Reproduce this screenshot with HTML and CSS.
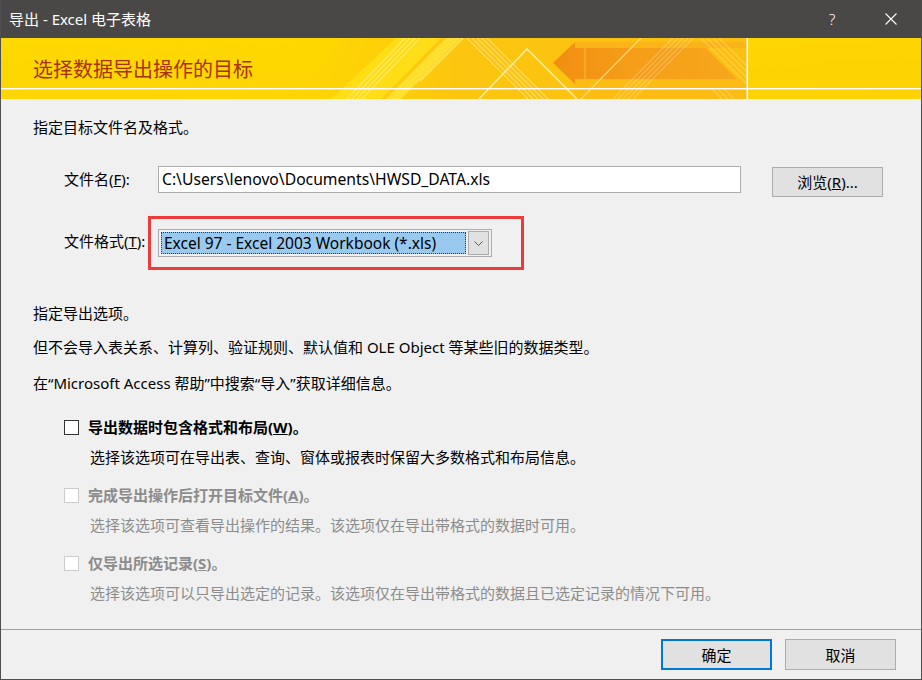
FILE: index.html
```html
<!DOCTYPE html>
<html lang="zh-CN">
<head>
<meta charset="utf-8">
<title>导出 - Excel 电子表格</title>
<link rel="stylesheet" href="styles.css">
</head>
<body>
<div class="window">
  <div class="titlebar">
    <span class="title">导出 - Excel 电子表格</span>
    <span class="help">?</span>
    <span class="close">
      <svg width="12" height="12" viewBox="0 0 12 12"><path d="M0.5 0.5 L11.5 11.5 M11.5 0.5 L0.5 11.5" stroke="#fff" stroke-width="1.1" fill="none"/></svg>
    </span>
  </div>

  <div class="banner">
    <svg class="banner-art" width="920" height="61" viewBox="0 0 920 61">
      <defs>
        <linearGradient id="bannerBase" x1="0" y1="0" x2="1" y2="1">
          <stop offset="0" stop-color="#ffd900"/>
          <stop offset="1" stop-color="#fdd200"/>
        </linearGradient>
        <linearGradient id="arrowFill" x1="0" y1="0" x2="1" y2="0">
          <stop offset="0" stop-color="#f28d12"/>
          <stop offset="0.4" stop-color="#f59d18"/>
          <stop offset="1" stop-color="#f7a71b"/>
        </linearGradient>
        <linearGradient id="warmBand" x1="0" y1="0" x2="1" y2="0">
          <stop offset="0" stop-color="#fdcb0e" stop-opacity="0"/>
          <stop offset="0.35" stop-color="#fcc60f"/>
          <stop offset="1" stop-color="#fbbf12"/>
        </linearGradient>
      </defs>
      <rect width="920" height="61" fill="url(#bannerBase)"/>
      <!-- warm backdrop behind the pattern -->
      <polygon points="340,0 746,0 746,61 300,61" fill="url(#warmBand)"/>
      <!-- bright diagonal band -->
      <polygon points="395,0 440,0 380,61 330,61" fill="#ffe11a" opacity=".8"/>
      <polygon points="445,0 460,0 400,61 385,61" fill="#ffe840" opacity=".7"/>
      <!-- rising stripe group, left -->
      <g stroke="#fff" stroke-width="1.2" opacity=".35">
        <path d="M346 61 L404 0 M351 61 L409 0 M356 61 L414 0 M361 61 L419 0"/>
      </g>
      <!-- falling stripe group -->
      <g stroke="#fff" stroke-width="1.2" opacity=".4">
        <path d="M466 0 L527 61 M471 0 L532 61 M476 0 L537 61 M481 0 L542 61 M486 0 L547 61"/>
      </g>
      <!-- orange arrow block -->
      <polygon points="574,4 746,4 746,10 574,10" fill="#fab41a"/>
      <polygon points="552,25 574,4 574,10 705,10 736,41 574,41 574,46" fill="url(#arrowFill)"/>
      <polygon points="574,41 746,41 746,61 574,61" fill="#fbbb15" opacity=".85"/>
      <line x1="584" y1="10" x2="584" y2="41" stroke="#fbbd3c" stroke-width="1"/>
      <!-- triangle outline -->
      <path d="M478 61 L526 11 L576 61" stroke="#fff3b0" stroke-width="1.6" fill="none" opacity=".85"/>
      <!-- rising stripe group, right -->
      <g stroke="#fff" stroke-width="1.1" opacity=".25">
        <path d="M612 61 L672 0 M617 61 L677 0 M622 61 L682 0 M627 61 L687 0 M632 61 L692 0"/>
      </g>
      <path d="M580 61 L640 0" stroke="#ffe27a" stroke-width="1.4" opacity=".8"/>
      <path d="M419 43 L462 0" stroke="#fff176" stroke-width="1.4" opacity=".8"/>
      <!-- falling stripe group, far right -->
      <g stroke="#fff" stroke-width="1.1" opacity=".25">
        <path d="M700 0 L746 46 M706 0 L746 40 M712 0 L746 34 M718 0 L746 28"/>
        <path d="M710 50 L721 61 M716 50 L727 61 M722 50 L733 61"/>
      </g>
      <!-- frame lines -->
      <rect x="0" y="50" width="920" height="1.4" fill="#fff"/>
      <rect x="745.5" y="0" width="1.6" height="61" fill="#fff"/>
    </svg>
    <h1 class="banner-title">选择数据导出操作的目标</h1>
  </div>

  <div class="content">
    <p class="intro">指定目标文件名及格式。</p>

    <div class="file-row">
      <span class="field-label file-label">文件名(<u>F</u>):</span>
      <div class="textbox">C:\Users\lenovo\Documents\HWSD_DATA.xls</div>
      <button class="btn browse">浏览(<u>R</u>)...</button>
    </div>

    <div class="format-row">
      <span class="field-label format-label">文件格式(<u>T</u>):</span>
      <div class="mark">
        <div class="combo">
          <span class="combo-value">Excel 97 - Excel 2003 Workbook (*.xls)</span>
          <span class="combo-arrow">
            <svg width="9" height="5" viewBox="0 0 9 5"><path d="M0.5 0.5 L4.5 4.5 L8.5 0.5" stroke="#555" stroke-width="1" fill="none"/></svg>
          </span>
        </div>
      </div>
    </div>

    <p class="section">指定导出选项。</p>
    <p class="note">但不会导入表关系、计算列、验证规则、默认值和 OLE Object 等某些旧的数据类型。</p>
    <p class="note help-note">在“Microsoft Access 帮助”中搜索“导入”获取详细信息。</p>

    <div class="option">
      <span class="check"></span>
      <span class="option-label">导出数据时包含格式和布局(<u>W</u>)。</span>
    </div>
    <p class="option-desc">选择该选项可在导出表、查询、窗体或报表时保留大多数格式和布局信息。</p>

    <div class="option disabled">
      <span class="check"></span>
      <span class="option-label">完成导出操作后打开目标文件(<u>A</u>)。</span>
    </div>
    <p class="option-desc disabled">选择该选项可查看导出操作的结果。该选项仅在导出带格式的数据时可用。</p>

    <div class="option disabled">
      <span class="check"></span>
      <span class="option-label">仅导出所选记录(<u>S</u>)。</span>
    </div>
    <p class="option-desc disabled">选择该选项可以只导出选定的记录。该选项仅在导出带格式的数据且已选定记录的情况下可用。</p>
  </div>

  <div class="footer">
    <button class="btn primary">确定</button>
    <button class="btn">取消</button>
  </div>
</div>
</body>
</html>
```

FILE: styles.css
```css
* {
  box-sizing: border-box;
}

html, body {
  margin: 0;
  padding: 0;
  background: #f0f0f0;
}

body {
  font-family: "Noto Sans", "Noto Sans CJK SC", sans-serif;
  font-size: 15px;
  color: #000;
}

.window {
  width: 922px;
  height: 680px;
  border: 1px solid #4f4f4f;
  border-top: none;
  background: #f0f0f0;
  display: flex;
  flex-direction: column;
  overflow: hidden;
}

/* title bar */
.titlebar {
  height: 38px;
  flex: none;
  background: #4a4846;
  color: #fff;
  display: flex;
  align-items: center;
  padding-left: 8px;
}

.title {
  font-size: 15px;
  line-height: 20px;
  flex: 1;
}

.help {
  font-size: 15px;
  width: 12px;
  margin-right: 44px;
  line-height: 20px;
  font-weight: 300;
}

.close {
  width: 12px;
  height: 12px;
  margin-right: 24px;
  display: flex;
}

/* yellow header */
.banner {
  position: relative;
  height: 61px;
  flex: none;
  overflow: hidden;
}

.banner-art {
  position: absolute;
  left: 0;
  top: 0;
}

.banner-title {
  position: relative;
  margin: 0;
  padding: 19px 0 0 32px;
  font-family: "Noto Sans CJK SC", sans-serif;
  font-size: 20px;
  font-weight: normal;
  line-height: 24px;
  color: #a8320d;
}

/* main area */
.content {
  flex: 1;
  padding: 18px 0 0 32px;
}

p {
  margin: 0;
  line-height: 20px;
}

.intro {
  margin-bottom: 29px;
}

.file-row,
.format-row {
  display: flex;
  margin-left: 31px;
}

.field-label {
  line-height: 20px;
  flex: none;
}

.file-label {
  width: 94px;
  margin-top: 3px;
}

.format-label {
  width: 84px;
  margin-top: 15px;
}

.textbox {
  width: 583px;
  height: 27px;
  border: 1px solid #adadad;
  background: #fff;
  font-size: 15.7px;
  line-height: 25px;
  padding-left: 3px;
  white-space: nowrap;
}

.btn {
  font-family: "Noto Sans", "Noto Sans CJK SC", sans-serif;
  font-size: 15px;
  color: #000;
  background: #e1e1e1;
  border: 1px solid #adadad;
  padding: 0;
  width: 111px;
  height: 31px;
  line-height: 20px;
}

.browse {
  margin-left: 31px;
  margin-top: 1px;
  height: 30px;
}

.file-row {
  margin-bottom: 19px;
}

/* red annotation box around the format picker */
.mark {
  border: 3px solid #ef3a3b;
  padding: 10px 29px 10px 7px;
}

.combo {
  width: 334px;
  height: 28px;
  border: 1px solid #adadad;
  background: #f0f0f0;
  display: flex;
  align-items: center;
  padding: 2px;
}

.combo-value {
  flex: 1;
  height: 22px;
  background: #99c9ef;
  border: 1px dotted #333;
  font-size: 15.5px;
  line-height: 20px;
  padding-left: 2px;
  white-space: nowrap;
  overflow: hidden;
}

.combo-arrow {
  width: 21px;
  height: 24px;
  margin-left: 2px;
  background: #e1e1e1;
  border: 1px solid #adadad;
  display: flex;
  align-items: center;
  justify-content: center;
}

.section {
  margin-top: 33px;
}

.note {
  margin-top: 14px;
}

.help-note {
  margin-top: 16px;
}

/* option checkboxes */
.option {
  display: flex;
  align-items: center;
  margin-left: 31px;
  margin-top: 24px;
}

.option + .option-desc {
  margin-top: 10px;
}

.option.disabled {
  margin-top: 18px;
}

.check {
  width: 15px;
  height: 15px;
  border: 1px solid #333;
  background: #fff;
  margin-right: 9px;
  flex: none;
}

.option-label {
  font-weight: bold;
  line-height: 20px;
}

.option-desc {
  margin-left: 57px;
}

.disabled .check {
  border-color: #cccccc;
}

.disabled .option-label,
.option-desc.disabled {
  color: #8c8c8c;
}

/* dialog buttons */
.footer {
  flex: none;
  height: 50px;
  border-top: 1px solid #a0a0a0;
  display: flex;
  justify-content: flex-end;
  padding: 9px 25px 0 0;
  gap: 13px;
}

.primary {
  border: 2px solid #0078d7;
}
```
